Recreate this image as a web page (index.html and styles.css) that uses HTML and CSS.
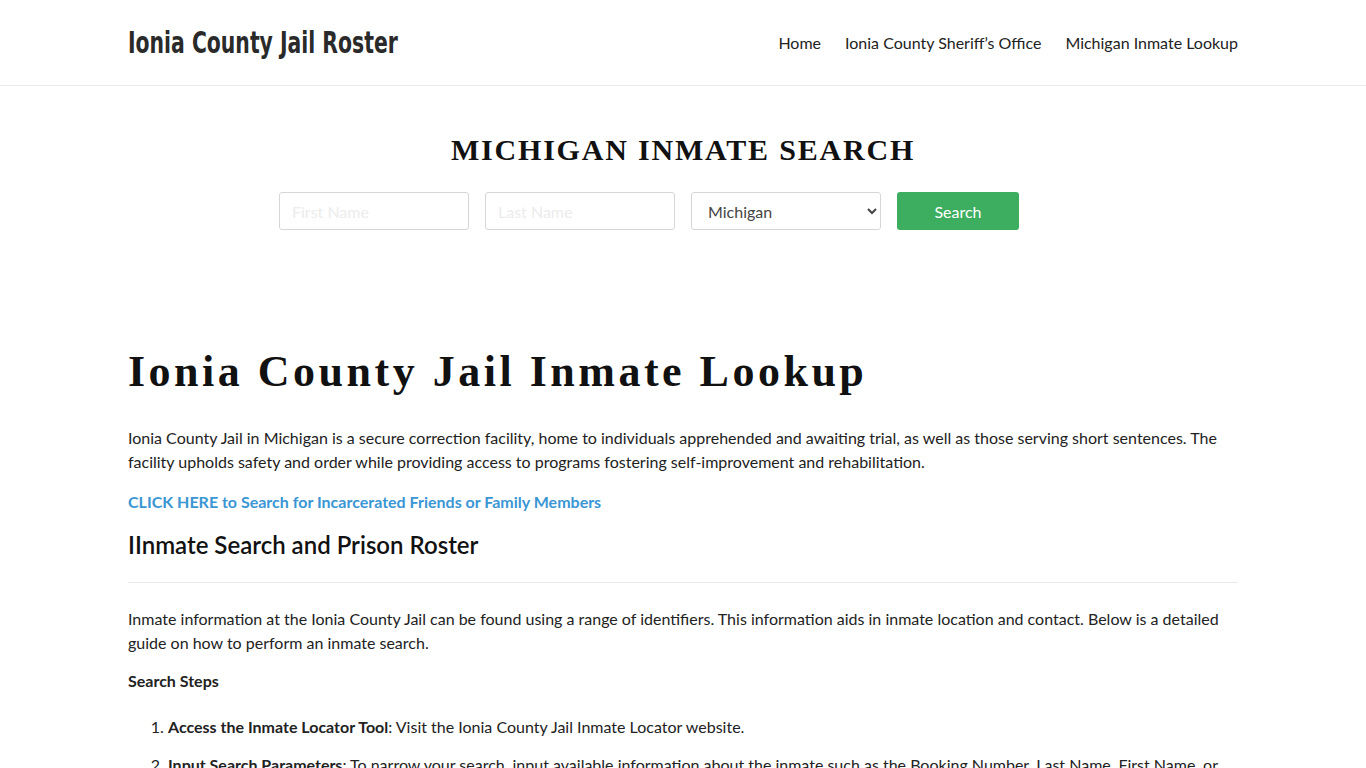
FILE: index.html
```html
<!DOCTYPE html>
<html lang="en">
<head>
<meta charset="utf-8">
<title>Ionia County Jail Roster</title>
<link rel="stylesheet" href="styles.css">
</head>
<body>
<header class="site-header">
  <div class="container header-inner">
    <a class="logo" href="#">Ionia County Jail Roster</a>
    <nav class="nav">
      <a href="#">Home</a>
      <a href="#">Ionia County Sheriff’s Office</a>
      <a href="#">Michigan Inmate Lookup</a>
    </nav>
  </div>
</header>
<section class="search">
  <h2 class="search-title">MICHIGAN INMATE SEARCH</h2>
  <form class="search-form">
    <input class="field" type="text" placeholder="First Name">
    <input class="field" type="text" placeholder="Last Name">
    <select class="field select">
      <option>Michigan</option>
    </select>
    <button class="btn" type="button">Search</button>
  </form>
</section>
<main class="container content">
  <h1 class="page-title">Ionia County Jail Inmate Lookup</h1>
  <p class="intro">Ionia County Jail in Michigan is a secure correction facility, home to individuals apprehended and awaiting trial, as well as those serving short sentences. The facility upholds safety and order while providing access to programs fostering self-improvement and rehabilitation.</p>
  <p class="cta-line"><a class="cta" href="#">CLICK HERE to Search for Incarcerated Friends or Family Members</a></p>
  <h2 class="section-title">IInmate Search and Prison Roster</h2>
  <hr class="rule">
  <p>Inmate information at the Ionia County Jail can be found using a range of identifiers. This information aids in inmate location and contact. Below is a detailed guide on how to perform an inmate search.</p>
  <p><strong>Search Steps</strong></p>
  <ol class="steps">
    <li><strong>Access the Inmate Locator Tool</strong>: Visit the Ionia County Jail Inmate Locator website.</li>
    <li><strong>Input Search Parameters</strong>: To narrow your search, input available information about the inmate such as the Booking Number, Last Name, First Name, or Date of Birth.</li>
  </ol>
</main>
</body>
</html>
```
FILE: styles.css
```css
* { box-sizing: border-box; }
html, body { margin: 0; padding: 0; }
body {
  background: #fff;
  color: #222;
  font-family: Lato, "Open Sans", sans-serif;
  font-size: 16px;
  line-height: 24px;
}
a { text-decoration: none; }
.container {
  width: 1110px;
  margin: 0 auto;
}
.site-header {
  border-bottom: 1px solid #eaeaea;
  height: 86px;
}
.header-inner {
  height: 85px;
  display: flex;
  align-items: center;
  justify-content: space-between;
}
.logo {
  display: inline-block;
  font-family: "DejaVu Sans Condensed", "DejaVu Sans", sans-serif;
  font-stretch: condensed;
  font-weight: 700;
  font-size: 30px;
  color: #2a2a2a;
  transform: scaleX(0.755);
  transform-origin: left center;
  white-space: nowrap;
}
.nav {
  display: flex;
  gap: 24px;
}
.nav a {
  color: #222;
  font-size: 16px;
}
.search {
  text-align: center;
  padding-top: 46px;
  padding-bottom: 96px;
}
.search-title {
  margin: 0;
  font-family: "Liberation Serif", serif;
  font-weight: 700;
  font-size: 30px;
  line-height: 36px;
  letter-spacing: 1.8px;
  color: #111;
}
.search-form {
  margin-top: 24px;
  display: flex;
  justify-content: center;
  gap: 16px;
  padding-right: 68px;
}
.field {
  width: 190px;
  height: 38px;
  border: 1px solid #d6d6d6;
  border-radius: 3px;
  padding: 0 12px;
  font-family: Lato, sans-serif;
  font-size: 16px;
  color: #444;
  background: #fff;
}
.field::placeholder { color: #ececec; }
.select { padding-left: 12px; }
.btn {
  width: 122px;
  height: 38px;
  border: 0;
  border-radius: 3px;
  background: #3dae5f;
  color: #fff;
  font-family: Lato, sans-serif;
  font-size: 16px;
}
.content { padding-top: 20px; }
.page-title {
  margin: 0 0 28px;
  font-family: "Liberation Serif", serif;
  font-weight: 700;
  font-size: 44px;
  line-height: 52px;
  letter-spacing: 3.5px;
  color: #111;
}
.content p { margin: 0 0 14px; }
.content .intro { margin-bottom: 16px; }
.cta {
  color: #3a96d4;
  font-weight: 700;
}
.section-title {
  margin: 0;
  font-weight: 600;
  font-size: 24px;
  line-height: 34px;
  color: #111;
}
.rule {
  border: 0;
  border-top: 1px solid #eaeaea;
  margin: 20px 0 24px;
}
.steps {
  margin: 22px 0 0;
  padding-left: 40px;
}
.steps li { margin-bottom: 14px; }
```
